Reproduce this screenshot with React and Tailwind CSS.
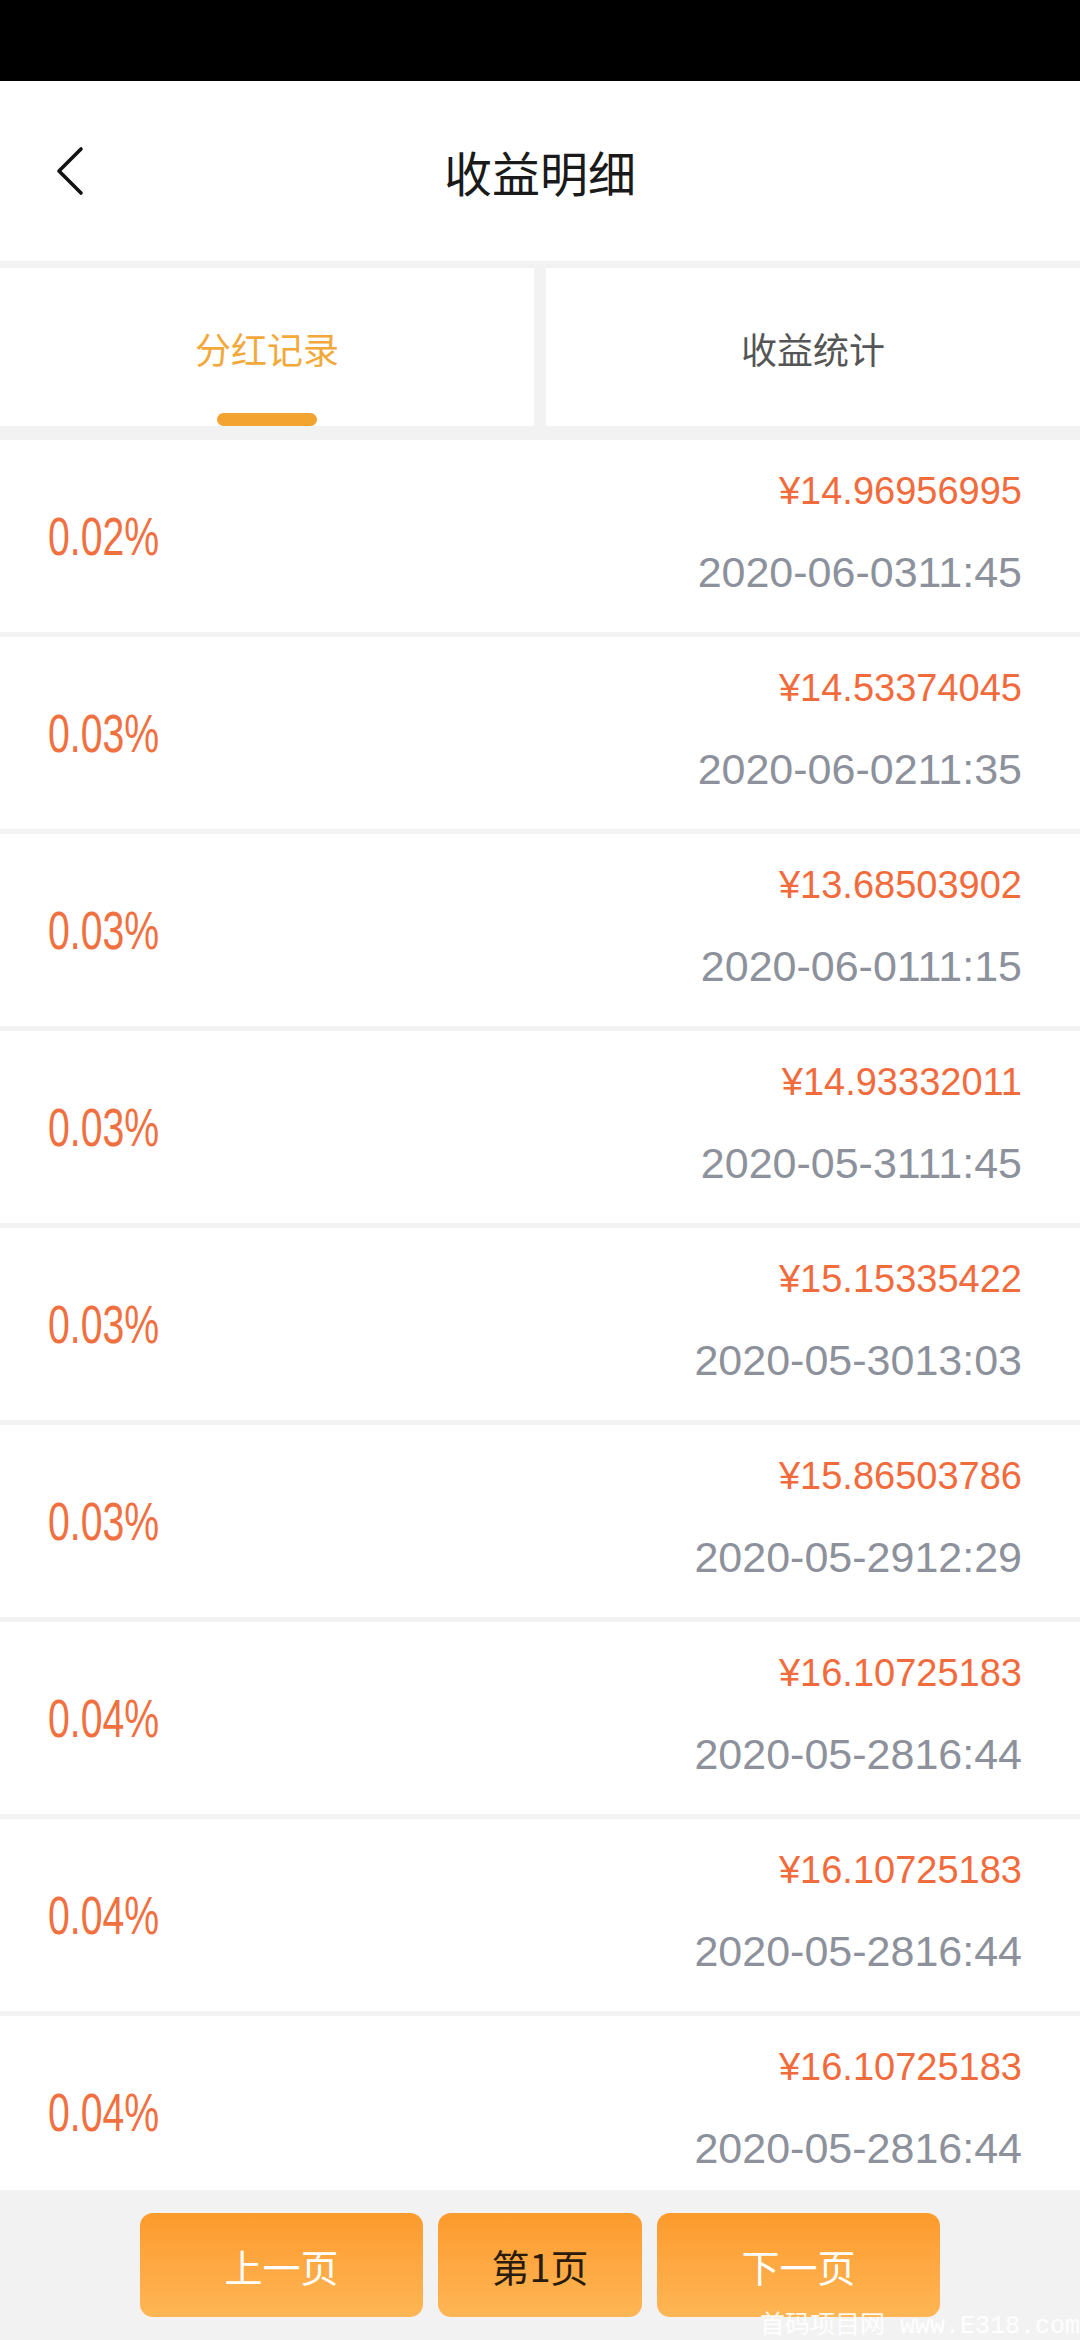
import React from "react";

const rows = [
  ["0.02%", "¥14.96956995", "2020-06-0311:45"],
  ["0.03%", "¥14.53374045", "2020-06-0211:35"],
  ["0.03%", "¥13.68503902", "2020-06-0111:15"],
  ["0.03%", "¥14.93332011", "2020-05-3111:45"],
  ["0.03%", "¥15.15335422", "2020-05-3013:03"],
  ["0.03%", "¥15.86503786", "2020-05-2912:29"],
  ["0.04%", "¥16.10725183", "2020-05-2816:44"],
  ["0.04%", "¥16.10725183", "2020-05-2816:44"],
  ["0.04%", "¥16.10725183", "2020-05-2816:44"],
];

const cjk = { fontFamily: '"Noto Sans CJK SC", "Noto Sans", sans-serif' };
const sans = { fontFamily: '"Liberation Sans", Arial, sans-serif' };

export default function App() {
  return (
    <div className="relative w-[1080px] h-[2340px] flex flex-col bg-[#f2f2f2] overflow-hidden">
      <div className="h-[81px] shrink-0 bg-black" />
      <header className="h-[180px] shrink-0 bg-white grid grid-cols-[1fr_auto_1fr] items-center">
        <div className="pl-[55px] flex items-center">
          <svg width="30" height="50" viewBox="0 0 30 50" fill="none">
            <polyline points="26,3 4,25 26,47" stroke="#111" strokeWidth="3.6" strokeLinecap="round" strokeLinejoin="round" />
          </svg>
        </div>
        <h1 className="text-[48px] leading-[48px] text-[#1a1a1a] font-normal" style={cjk}>收益明细</h1>
        <div />
      </header>
      <div className="mt-[7px] h-[158px] shrink-0 flex gap-[12px]">
        <div className="flex-1 bg-white flex flex-col items-center pt-[62px]">
          <span className="text-[36px] leading-[36px] text-[#f2a93b]" style={cjk}>分红记录</span>
          <div className="mt-auto w-[100px] h-[13px] rounded-full bg-[#f3a32f]" />
        </div>
        <div className="flex-1 bg-white flex flex-col items-center pt-[62px]">
          <span className="text-[36px] leading-[36px] text-[#555555]" style={cjk}>收益统计</span>
        </div>
      </div>
      <div className="mt-[14px] flex-1 min-h-0 overflow-hidden flex flex-col gap-[5px]">
        {rows.map((r, i) => (
          <div key={i} className="h-[192px] shrink-0 bg-white flex items-center justify-between pl-[48px] pr-[58px]">
            <span
              className="inline-block origin-left scale-x-[0.74] text-[53px] leading-[53px] text-[#f0703f]"
              style={sans}
            >
              {r[0]}
            </span>
            <div className="self-stretch flex flex-col items-end pt-[32px]">
              <span className="text-[38px] leading-[38px] text-[#f26b3c]" style={sans}>
                {r[1]}
              </span>
              <span className="mt-[41px] text-[43px] leading-[43px] text-[#8d919b]" style={sans}>
                {r[2]}
              </span>
            </div>
          </div>
        ))}
      </div>
      <div className="h-[150px] shrink-0 bg-[#f2f2f2] flex justify-center pt-[23px] gap-[15px]">
        <button className="w-[283px] h-[104px] rounded-[13px] bg-gradient-to-b from-[#fd9a2b] to-[#feb654] text-white text-[38px]" style={cjk}>上一页</button>
        <button className="w-[204px] h-[104px] rounded-[13px] bg-gradient-to-b from-[#fd9a2b] to-[#feb654] text-[#2a1c0c] text-[38px]" style={cjk}>第1页</button>
        <button className="w-[283px] h-[104px] rounded-[13px] bg-gradient-to-b from-[#fd9a2b] to-[#feb654] text-white text-[38px]" style={cjk}>下一页</button>
      </div>
      <div
        className="absolute right-0 bottom-0 text-[25px] leading-[26px] text-white/90 whitespace-nowrap"
        style={{ fontFamily: '"Liberation Mono", "Noto Sans CJK SC", monospace' }}
      >
        首码项目网 www.E318.com
      </div>
    </div>
  );
}
